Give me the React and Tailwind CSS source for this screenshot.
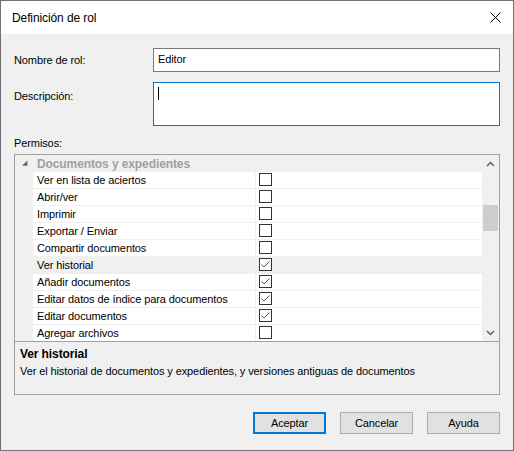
const rows = [
  ["Ver en lista de aciertos", false],
  ["Abrir/ver", false],
  ["Imprimir", false],
  ["Exportar / Enviar", false],
  ["Compartir documentos", false],
  ["Ver historial", true, true],
  ["Añadir documentos", true],
  ["Editar datos de índice para documentos", true],
  ["Editar documentos", true],
  ["Agregar archivos", false],
];

function Box({ checked }) {
  return (
    <div className="w-[13px] h-[13px] border border-[#333] bg-white flex items-center justify-center">
      {checked && (
        <svg width="11" height="11" viewBox="0 0 11 11"><path d="M1.5 5.5 L4 8 L9.5 2.5" fill="none" stroke="#555" strokeWidth="1" /></svg>
      )}
    </div>
  );
}

function Btn({ children, primary }) {
  return (
    <div className={`w-[73px] h-[22px] flex items-center justify-center bg-[#e1e1e1] border ${primary ? "border-[#0078d7] border-2" : "border-[#adadad]"}`}>
      {children}
    </div>
  );
}

export default function App() {
  return (
    <div className="w-[514px] h-[451px] border border-[#707070] bg-[#f0f0f0] flex flex-col text-[11px] tracking-[-0.1px] text-black overflow-hidden" style={{ fontFamily: '"Liberation Sans", Arial, sans-serif' }}>
      <div className="h-[33px] bg-white flex items-center justify-between pl-[11px] pr-[12px] shrink-0">
        <span className="text-[12px]">Definición de rol</span>
        <svg width="11" height="11" viewBox="0 0 11 11"><path d="M0.5 0.5 L10.5 10.5 M10.5 0.5 L0.5 10.5" stroke="#000" strokeWidth="1" /></svg>
      </div>
      <div className="flex flex-col px-[13px] pt-[14px]">
        <div className="flex items-center h-[24px]">
          <span className="w-[139px]">Nombre de rol:</span>
          <div className="flex-1 h-[24px] bg-white border border-[#7a7a7a] px-[4px] flex items-center pb-[2px]">Editor</div>
        </div>
        <div className="flex mt-[10px]">
          <span className="w-[139px] pt-[6px]">Descripción:</span>
          <div className="flex-1 h-[44px] bg-white border border-[#0078d7] px-[4px] pt-[4px]"><div className="w-px h-[13px] bg-black" /></div>
        </div>
        <div className="mt-[9px] h-[19px]">Permisos:</div>
        <div className="h-[241px] bg-[#f0f0f0] border border-[#a0a0a0] flex flex-col">
          <div className="h-[186px] flex bg-white">
            <div className="flex-1 flex flex-col bg-[#f0f0f0]">
              <div className="h-[17px] flex items-center shrink-0">
                <span className="w-[22px] text-[7px] text-[#666] pl-[7px]">◢</span>
                <span className="font-bold text-[#a0a0a0] text-[12px]">Documentos y expedientes</span>
              </div>
              {rows.map(([label, c, hl]) => (
                <div key={label} className="h-[17px] shrink-0 flex ml-[18px] border-b border-[#f0f0f0] overflow-hidden">
                  <div className={`w-[223px] pl-[4px] flex items-center border-r border-[#f0f0f0] ${hl ? "bg-[#f0f0f0]" : "bg-white"}`}>{label}</div>
                  <div className={`flex-1 pl-[3px] pt-[1px] ${hl ? "bg-[#f0f0f0]" : "bg-white"}`}><Box checked={c} /></div>
                </div>
              ))}
            </div>
            <div className="w-[17px] bg-[#f0f0f0] flex flex-col items-center">
              <div className="h-[17px] flex items-center text-[#606060]">
                <svg width="9" height="6" viewBox="0 0 9 6"><path d="M1 5 L4.5 1.5 L8 5" fill="none" stroke="#606060" strokeWidth="1.5" /></svg>
              </div>
              <div className="w-[15px] h-[26px] bg-[#cdcdcd] mt-[33px]" />
              <div className="flex-1" />
              <div className="h-[17px] flex items-center">
                <svg width="9" height="6" viewBox="0 0 9 6"><path d="M1 1 L4.5 4.5 L8 1" fill="none" stroke="#606060" strokeWidth="1.5" /></svg>
              </div>
            </div>
          </div>
          <div className="border-t border-[#a0a0a0] px-[5px] pt-[3px]">
            <div className="font-bold text-[12px]">Ver historial</div>
            <div>Ver el historial de documentos y expedientes, y versiones antiguas de documentos</div>
          </div>
        </div>
        <div className="flex justify-end gap-[14px] mt-[17px] pr-0">
          <Btn primary>Aceptar</Btn>
          <Btn>Cancelar</Btn>
          <Btn>Ayuda</Btn>
        </div>
      </div>
    </div>
  );
}
